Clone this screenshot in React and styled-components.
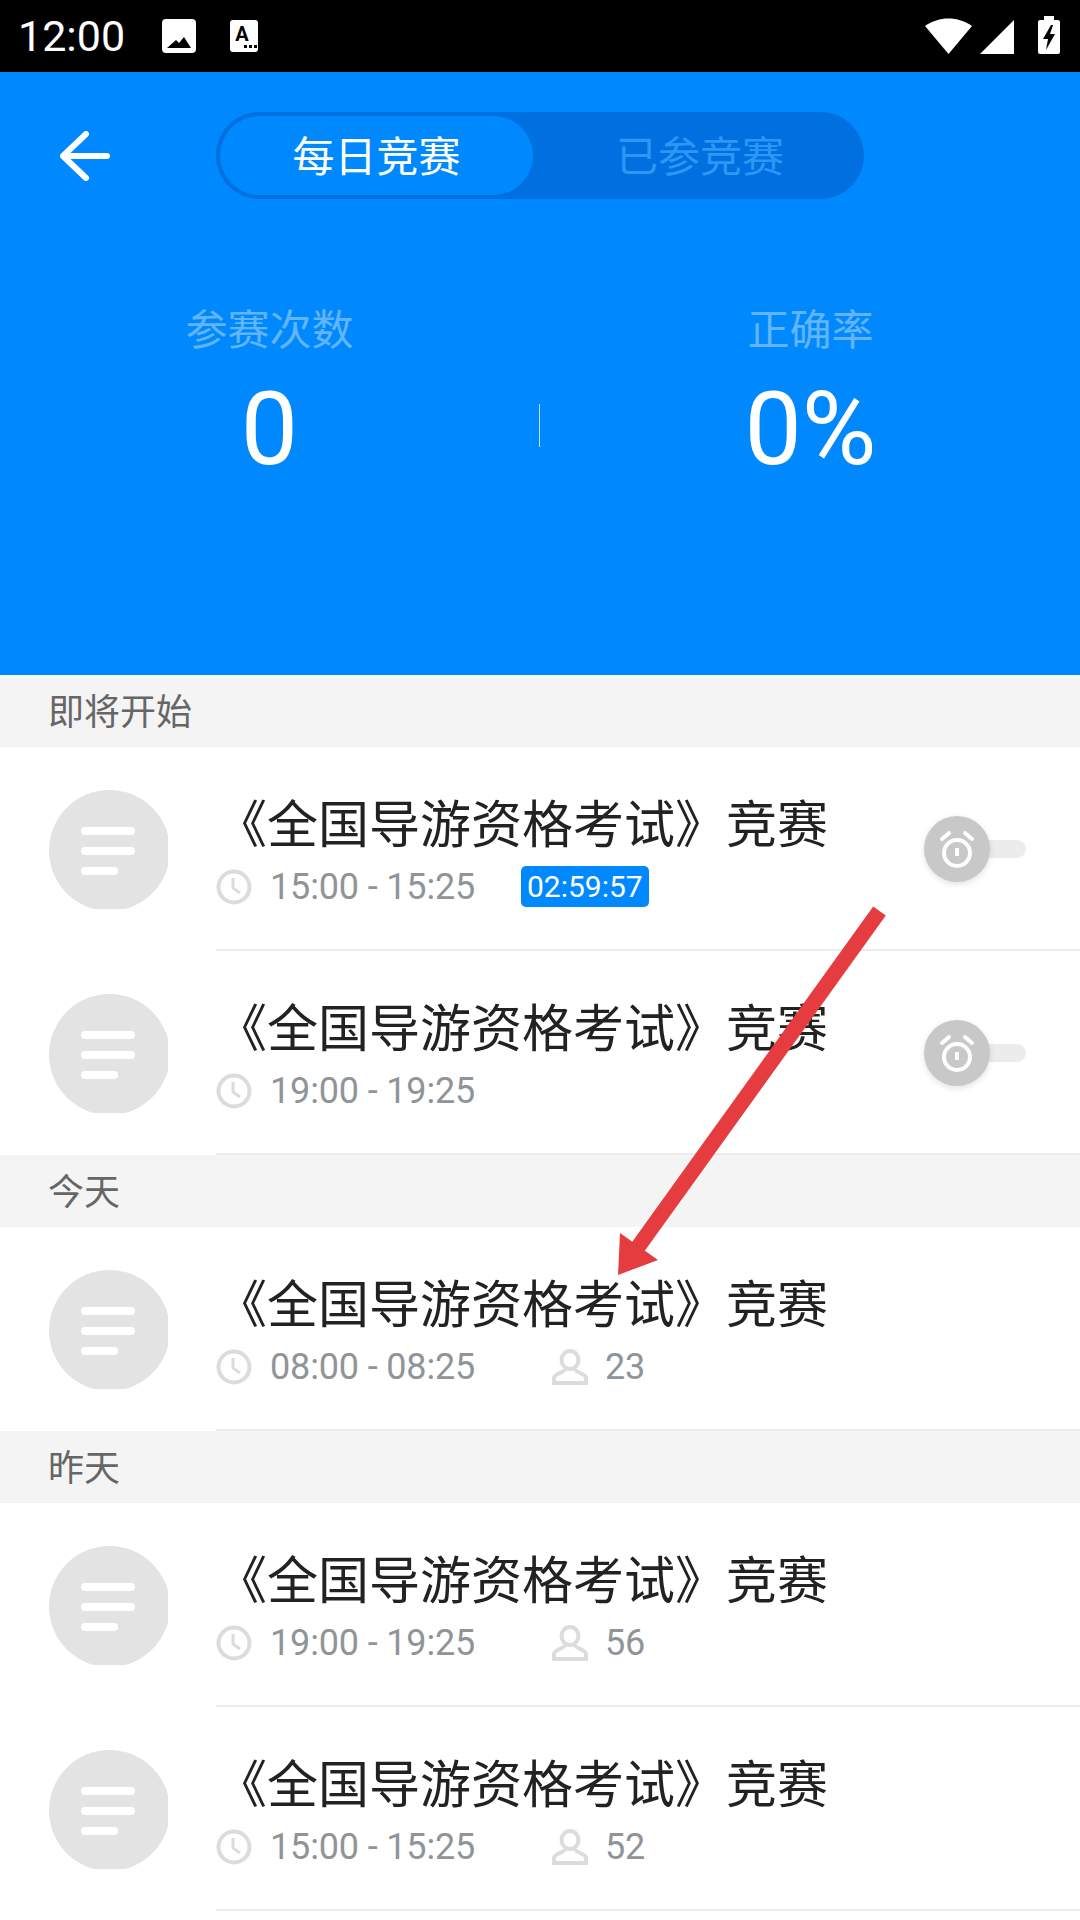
import React from 'react';
import styled, { createGlobalStyle } from 'styled-components';

const GlobalStyle = createGlobalStyle`
  html, body {
    margin: 0;
    padding: 0;
    background: #fff;
    font-family: Roboto, "Noto Sans CJK SC", sans-serif;
  }
`;

const Page = styled.div`
  position: relative;
  width: 1080px;
  height: 1920px;
  overflow: hidden;
  background: #fff;
`;

const StatusBar = styled.div`
  height: 72px;
  background: #000;
  color: #fff;
  display: flex;
  align-items: center;
  padding: 0 20px 0 18px;
`;

const Clock = styled.div`
  font-size: 43px;
  width: 144px;
`;

const StatusRight = styled.div`
  margin-left: auto;
  display: flex;
  align-items: flex-end;
  height: 38px;
  margin-top: -3px;
`;

const NoticeIcons = styled.div`
  display: flex;
  align-items: center;
  gap: 34px;
`;

const Hero = styled.div`
  height: 603px;
  background: #0089ff;
  display: flex;
  flex-direction: column;
`;

const NavRow = styled.div`
  display: flex;
  align-items: center;
  height: 87px;
  margin-top: 40px;
`;

const BackButton = styled.div`
  width: 216px;
  padding-left: 59px;
  box-sizing: border-box;
  display: flex;
  align-items: center;
`;

const Segment = styled.div`
  width: 648px;
  height: 87px;
  box-sizing: border-box;
  padding: 4px;
  border-radius: 44px;
  background: #0070e0;
  display: flex;
`;

const SegmentItem = styled.div`
  width: ${p => (p.active ? '313px' : '327px')};
  box-sizing: border-box;
  padding: 0 0 4px ${p => (p.active ? '0' : '7px')};
  border-radius: 40px;
  background: ${p => (p.active ? '#0089ff' : 'transparent')};
  color: ${p => (p.active ? '#fff' : '#2e96f5')};
  font-size: 42px;
  display: flex;
  align-items: center;
  justify-content: center;
`;

const Stats = styled.div`
  display: flex;
  align-items: center;
  margin-top: 104px;
`;

const Stat = styled.div`
  flex: 1;
  display: flex;
  flex-direction: column;
  align-items: center;
`;

const StatLabel = styled.div`
  font-size: 42px;
  line-height: 56px;
  color: #62b4fb;
`;

const StatValue = styled.div`
  font-size: 102px;
  line-height: 120px;
  font-weight: 400;
  color: #fff;
  margin-top: 10px;
`;

const Divider = styled.div`
  width: 1px;
  height: 43px;
  margin: 59px 1px 0 0;
  background: rgba(255, 255, 255, 0.75);
`;

const SectionHeader = styled.div`
  height: 72px;
  box-sizing: border-box;
  background: #f4f4f4;
  color: #666;
  font-size: 36px;
  line-height: 72px;
  padding: 2px 0 0 48px;
`;

const Row = styled.div`
  height: 204px;
  box-sizing: border-box;
  display: flex;
  position: relative;
  background: #fff;
`;

const AvatarClip = styled.div`
  width: 119px;
  height: 119px;
  margin: 43px 0 0 49px;
  overflow: hidden;
  flex: none;
`;

const Avatar = styled.div`
  width: 121px;
  height: 121px;
  border-radius: 50%;
  background: #e3e3e3;
  display: flex;
  flex-direction: column;
  justify-content: center;
  gap: 12px;
  padding-left: 32px;
  box-sizing: border-box;
`;

const AvatarLine = styled.div`
  width: ${p => p.w}px;
  height: 8px;
  border-radius: 4px;
  background: #fff;
`;

const RowBody = styled.div`
  flex: 1;
  margin-left: 48px;
  border-bottom: 2px solid #ebebeb;
  padding-top: 49px;
`;

const Title = styled.div`
  font-size: 51px;
  line-height: 60px;
  color: #222;
  white-space: nowrap;
`;

const Meta = styled.div`
  display: flex;
  align-items: center;
  height: 44px;
  margin-top: 9px;
  color: #8f9499;
  font-size: 36px;
  letter-spacing: -0.15px;
`;

const Time = styled.span`
  margin-left: 18px;
  width: 251px;
`;

const Countdown = styled.span`
  background: #0089ff;
  color: #fff;
  font-size: 30px;
  height: 41px;
  line-height: 41px;
  padding: 0 6px;
  border-radius: 5px;
  margin-top: -2px;
  letter-spacing: 0;
`;

const Attendance = styled.span`
  margin-left: 31px;
  display: flex;
  align-items: center;
  gap: 17px;
`;

const Toggle = styled.div`
  position: absolute;
  right: 54px;
  top: 93px;
  width: 84px;
  height: 18px;
  border-radius: 9px;
  background: #ececec;
`;

const Knob = styled.div`
  position: absolute;
  left: -18px;
  top: -24px;
  width: 66px;
  height: 66px;
  border-radius: 50%;
  background: #c8c8c8;
  box-shadow: 0 2px 6px rgba(0, 0, 0, 0.12);
  display: flex;
  align-items: center;
  justify-content: center;
`;

const ArrowOverlay = styled.svg`
  position: absolute;
  left: 0;
  top: 0;
  pointer-events: none;
`;

const ClockIcon = () => (
  <svg width="36" height="36" viewBox="0 0 36 36" fill="none" stroke="#dcdcdc" strokeWidth="4">
    <circle cx="18" cy="18" r="15.5" />
    <path d="M17 9v10l7 5" strokeWidth="3" />
  </svg>
);

const PersonIcon = () => (
  <svg width="36" height="36" viewBox="0 0 36 36" fill="none" stroke="#dcdcdc" strokeWidth="4">
    <ellipse cx="18" cy="11" rx="8.5" ry="9" />
    <path d="M13 20c0 3-11 5-11 9v5h32v-5c0-4-11-6-11-9" />
  </svg>
);

const AlarmIcon = () => (
  <svg width="36" height="40" viewBox="0 0 36 40" fill="none" stroke="#fff" strokeLinecap="round">
    <circle cx="18" cy="24" r="13" strokeWidth="4" />
    <path d="M18 19v8" strokeWidth="4" strokeLinecap="butt" />
    <path d="M3 10l7-6M33 10l-7-6" strokeWidth="4" />
  </svg>
);

const BackIcon = () => (
  <svg width="52" height="50" viewBox="0 0 52 50" fill="none" stroke="#fff" strokeWidth="6" strokeLinecap="round" strokeLinejoin="round">
    <path d="M48 25H5M27 3L4 25l23 22" />
  </svg>
);

const PictureIcon = () => (
  <svg width="34" height="34" viewBox="0 0 34 34" fill="#fff">
    <path
      fillRule="evenodd"
      d="M4 0h26a4 4 0 0 1 4 4v26a4 4 0 0 1-4 4H4a4 4 0 0 1-4-4V4a4 4 0 0 1 4-4zM5 29h24l-7-11-5 6-3-3z"
    />
  </svg>
);

const KeyboardIcon = () => (
  <svg width="28" height="32" viewBox="0 0 28 32">
    <rect width="28" height="32" rx="3" fill="#fff" />
    <text x="12" y="21" fontSize="20" fontWeight="700" fontFamily="Roboto, sans-serif" textAnchor="middle" fill="#000">A</text>
    <path d="M14 25h3v3h-3zM19 25h3v3h-3zM24 25h3v3h-3z" fill="#000" />
  </svg>
);

const WifiIcon = () => (
  <svg width="47" height="36" viewBox="0 0 47 36" fill="#fff">
    <path d="M23.5 36L0 8C14-2 33-2 47 8z" />
  </svg>
);

const SignalIcon = () => (
  <svg width="34" height="34" viewBox="0 0 34 34" fill="#fff" style={{ marginLeft: 8 }}>
    <path d="M34 0v34H0z" />
  </svg>
);

const BatteryIcon = () => (
  <svg width="22" height="38" viewBox="0 0 22 38" fill="#fff" style={{ marginLeft: 24 }}>
    <path
      fillRule="evenodd"
      d="M6 0h10v4h4a2 2 0 0 1 2 2v30a2 2 0 0 1-2 2H2a2 2 0 0 1-2-2V6a2 2 0 0 1 2-2h4zM13 9L5 23h5l-2 11 9-16h-5l3-9z"
    />
  </svg>
);

const Item = ({ time, countdown, count, reminder }) => (
  <Row>
    <AvatarClip>
      <Avatar>
        <AvatarLine w={54} />
        <AvatarLine w={54} />
        <AvatarLine w={37} />
      </Avatar>
    </AvatarClip>
    <RowBody>
      <Title>《全国导游资格考试》竞赛</Title>
      <Meta>
        <ClockIcon />
        <Time>{time}</Time>
        {countdown && <Countdown>{countdown}</Countdown>}
        {count && (
          <Attendance>
            <PersonIcon />
            {count}
          </Attendance>
        )}
      </Meta>
    </RowBody>
    {reminder && (
      <Toggle>
        <Knob><AlarmIcon /></Knob>
      </Toggle>
    )}
  </Row>
);

const App = () => (
  <Page>
    <GlobalStyle />
    <StatusBar>
      <Clock>12:00</Clock>
      <NoticeIcons>
        <PictureIcon />
        <KeyboardIcon />
      </NoticeIcons>
      <StatusRight>
        <WifiIcon />
        <SignalIcon />
        <BatteryIcon />
      </StatusRight>
    </StatusBar>
    <Hero>
      <NavRow>
        <BackButton><BackIcon /></BackButton>
        <Segment>
          <SegmentItem active>每日竞赛</SegmentItem>
          <SegmentItem>已参竞赛</SegmentItem>
        </Segment>
      </NavRow>
      <Stats>
        <Stat>
          <StatLabel>参赛次数</StatLabel>
          <StatValue>0</StatValue>
        </Stat>
        <Divider />
        <Stat>
          <StatLabel>正确率</StatLabel>
          <StatValue>0%</StatValue>
        </Stat>
      </Stats>
    </Hero>
    <SectionHeader>即将开始</SectionHeader>
    <Item time="15:00 - 15:25" countdown="02:59:57" reminder />
    <Item time="19:00 - 19:25" reminder />
    <SectionHeader>今天</SectionHeader>
    <Item time="08:00 - 08:25" count="23" />
    <SectionHeader>昨天</SectionHeader>
    <Item time="19:00 - 19:25" count="56" />
    <Item time="15:00 - 15:25" count="52" />
    <ArrowOverlay width="1080" height="1920" viewBox="0 0 1080 1920">
      <path d="M879.5 911L638 1247" stroke="#e53c3f" strokeWidth="15.5" fill="none" />
      <path d="M618 1275L658 1260L620 1233z" fill="#e53c3f" />
    </ArrowOverlay>
  </Page>
);

export default App;
